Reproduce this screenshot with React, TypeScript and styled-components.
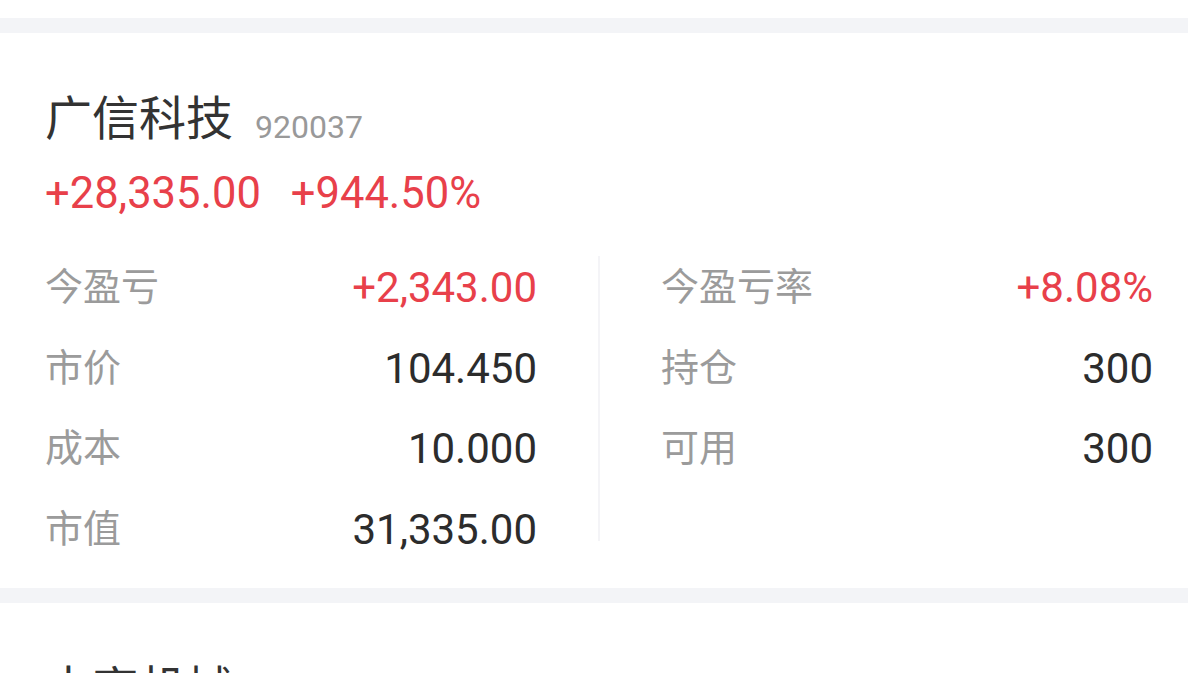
import React from "react";
import styled, { createGlobalStyle } from "styled-components";

const GlobalStyle = createGlobalStyle`
  html, body {
    margin: 0;
    padding: 0;
    background: #ffffff;
    overflow: hidden;
  }
  body {
    font-family: Roboto, "Noto Sans CJK SC", sans-serif;
  }
`;

const Page = styled.div`
  width: 1188px;
  height: 673px;
  overflow: hidden;
  display: flex;
  flex-direction: column;
  background: #f3f4f7;
`;

const TopStub = styled.div`
  height: 18px;
  flex: none;
  background: #ffffff;
`;

const Card = styled.section<{ $gapTop?: number }>`
  flex: none;
  margin-top: ${(p) => p.$gapTop ?? 15}px;
  background: #ffffff;
  padding: 57px 34px 18px 45px;
  display: flex;
  flex-direction: column;
`;

const TitleRow = styled.div`
  display: flex;
  align-items: baseline;
  gap: 22px;
  height: 56px;
`;

const Name = styled.span`
  font-family: "Noto Sans CJK SC", sans-serif;
  font-size: 47px;
  line-height: 56px;
  color: #333333;
  transform: translateY(-3px);
`;

const Code = styled.span`
  font-family: Roboto, sans-serif;
  font-size: 32px;
  color: #999999;
`;

const ProfitRow = styled.div`
  display: flex;
  gap: 30px;
  margin-top: 24px;
  height: 48px;
  align-items: center;
`;

const Profit = styled.span`
  font-family: Roboto, sans-serif;
  font-size: 43.5px;
  line-height: 48px;
  color: #e8404a;
`;

const Stats = styled.div`
  display: flex;
  margin-top: 30px;
`;

const Column = styled.div`
  width: 492px;
  display: flex;
  flex-direction: column;
`;

const Divider = styled.div`
  width: 2px;
  margin: 8px 61px 29px 61px;
  background: #f4f4f7;
  align-self: stretch;
`;

const Row = styled.div`
  height: 80.6px;
  display: flex;
  align-items: center;
  justify-content: space-between;
`;

const Label = styled.span`
  font-family: "Noto Sans CJK SC", sans-serif;
  font-size: 38px;
  line-height: 46px;
  padding-bottom: 8px;
  color: #9b9b9b;
`;

const Value = styled.span<{ $red?: boolean }>`
  font-family: Roboto, sans-serif;
  font-size: 42px;
  line-height: 46px;
  color: ${(p) => (p.$red ? "#e8404a" : "#2c2c2c")};
`;

type Item = { label: string; value: string; red?: boolean };

const left: Item[] = [
  { label: "今盈亏", value: "+2,343.00", red: true },
  { label: "市价", value: "104.450" },
  { label: "成本", value: "10.000" },
  { label: "市值", value: "31,335.00" },
];

const right: Item[] = [
  { label: "今盈亏率", value: "+8.08%", red: true },
  { label: "持仓", value: "300" },
  { label: "可用", value: "300" },
];

const StatColumn = ({ items }: { items: Item[] }) => (
  <Column>
    {items.map((it) => (
      <Row key={it.label}>
        <Label>{it.label}</Label>
        <Value $red={it.red}>{it.value}</Value>
      </Row>
    ))}
  </Column>
);

export default function App() {
  return (
    <Page>
      <GlobalStyle />
      <TopStub />
      <Card>
        <TitleRow>
          <Name>广信科技</Name>
          <Code>920037</Code>
        </TitleRow>
        <ProfitRow>
          <Profit>+28,335.00</Profit>
          <Profit>+944.50%</Profit>
        </ProfitRow>
        <Stats>
          <StatColumn items={left} />
          <Divider />
          <StatColumn items={right} />
        </Stats>
      </Card>
      <Card $gapTop={15}>
        <TitleRow>
          <Name>中宇机械</Name>
          <Code>920021</Code>
        </TitleRow>
      </Card>
    </Page>
  );
}
